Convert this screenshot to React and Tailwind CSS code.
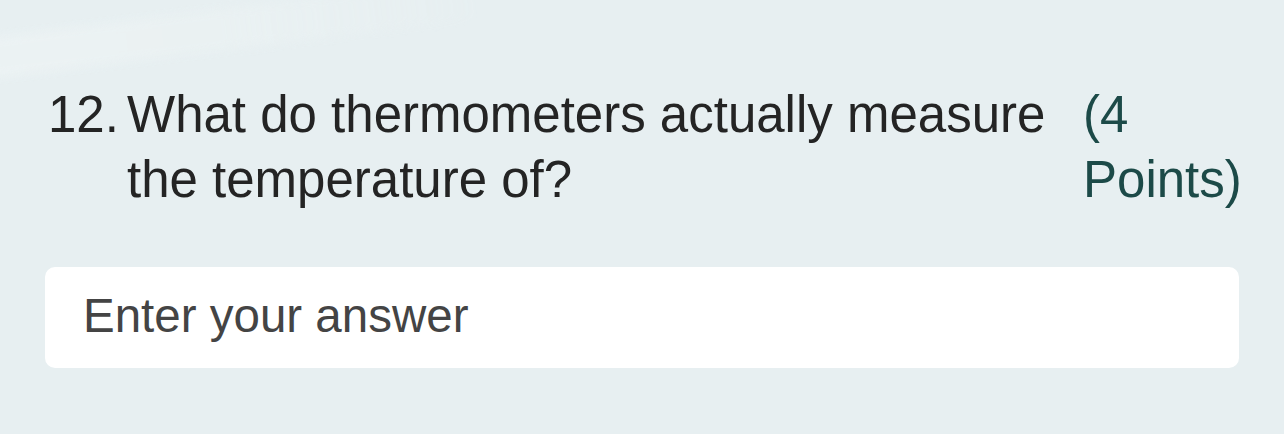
import React from "react";

export default function App() {
  return (
    <div className="relative min-h-screen w-full overflow-hidden bg-[#e7eff1] px-[45px] pt-[82px] font-['Liberation_Sans',Arial,sans-serif]">
      <div className="pointer-events-none absolute left-[-40px] top-[10px] h-[40px] w-[520px] rotate-[-7deg] bg-gradient-to-r from-[#eef4f5] via-[#ebf2f3] to-transparent opacity-80 blur-[4px]" />
      <div className="relative flex text-[51px] leading-[65px]">
        <span className="w-[82px] shrink-0 pl-[3px] text-[#242424]">12.</span>
        <span className="w-[956px] shrink-0 pr-[30px] text-[#242424]">
          What do thermometers actually measure the temperature of?
        </span>
        <span className="w-[156px] shrink-0 text-[#1c4a48]">(4 Points)</span>
      </div>
      <div className="relative mt-[55px] h-[101px] w-[1194px] rounded-[10px] bg-white pl-[38px] pt-[25px] text-[47.5px] leading-[47px] text-[#444444]">
        Enter your answer
      </div>
    </div>
  );
}
